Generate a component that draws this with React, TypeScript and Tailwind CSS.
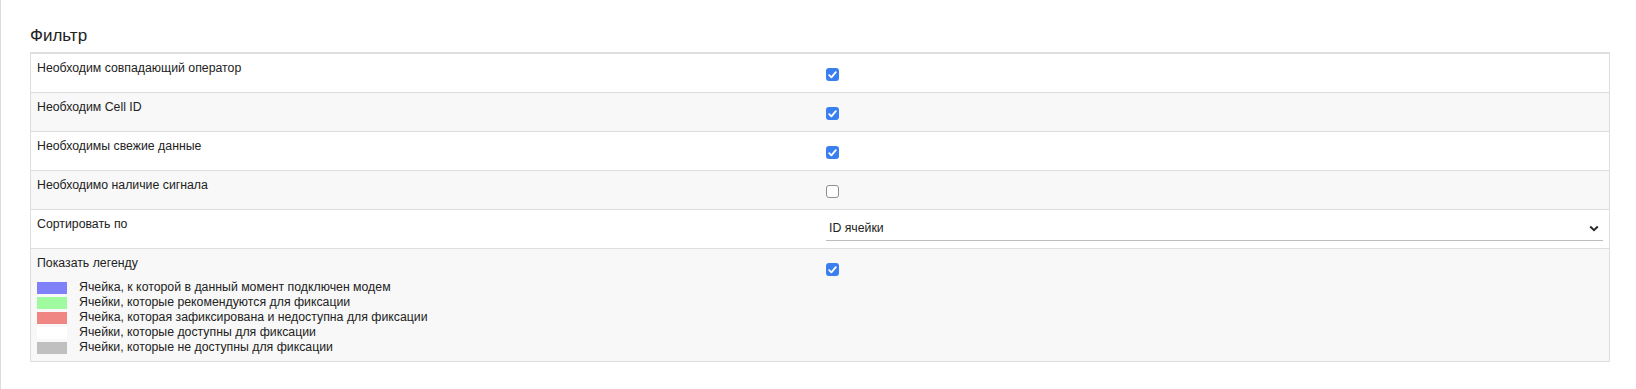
import React, { useState } from 'react';

const Checkbox: React.FC<{ checked: boolean; onChange: () => void }> = ({ checked, onChange }) => (
  <button
    type="button"
    onClick={onChange}
    className={`w-[13px] h-[13px] rounded-[3px] flex items-center justify-center ${checked ? 'bg-[#3a7ff0]' : 'bg-white border border-[#8f8f8f]'}`}
  >
    {checked && (
      <svg width="9" height="8" viewBox="0 0 9 8" fill="none">
        <path d="M1.2 4.2 L3.4 6.4 L7.8 1.2" stroke="white" strokeWidth="1.8" strokeLinecap="round" strokeLinejoin="round" />
      </svg>
    )}
  </button>
);

const legend = [
  { color: 'bg-[#8080f8]', text: 'Ячейка, к которой в данный момент подключен модем' },
  { color: 'bg-[#a0fba0]', text: 'Ячейки, которые рекомендуются для фиксации' },
  { color: 'bg-[#f08683]', text: 'Ячейка, которая зафиксирована и недоступна для фиксации' },
  { color: 'bg-white', text: 'Ячейки, которые доступны для фиксации' },
  { color: 'bg-[#c0c0c0]', text: 'Ячейки, которые не доступны для фиксации' },
];

const App: React.FC = () => {
  const [flags, setFlags] = useState({ operator: true, cell: true, fresh: true, signal: false, legend: true });
  const toggle = (k: keyof typeof flags) => setFlags({ ...flags, [k]: !flags[k] });

  const rows: { key: keyof typeof flags; label: string }[] = [
    { key: 'operator', label: 'Необходим совпадающий оператор' },
    { key: 'cell', label: 'Необходим Cell ID' },
    { key: 'fresh', label: 'Необходимы свежие данные' },
    { key: 'signal', label: 'Необходимо наличие сигнала' },
  ];

  return (
    <div className="min-h-screen bg-white border-l border-[#dcdcdc] pl-[29px] pr-[26px] pt-[26px] text-[#222] font-['Liberation_Sans',Arial,sans-serif]">
      <h2 className="text-[17px] leading-[20px] mb-[6px]">Фильтр</h2>

      <div className="border border-[#dedede] border-t-2 text-[12.3px] leading-[15px]">
        {rows.map((r, i) => (
          <div key={r.key} className={`grid grid-cols-2 h-[39px] border-b border-[#dedede] ${i % 2 === 1 ? 'bg-[#f8f8f8]' : 'bg-white'}`}>
            <div className="px-[6px] pt-[7px]">{r.label}</div>
            <div className="px-[6px] pt-[14px]">
              <Checkbox checked={flags[r.key]} onChange={() => toggle(r.key)} />
            </div>
          </div>
        ))}

        <div className="grid grid-cols-2 h-[39px] border-b border-[#dedede] bg-white">
          <div className="px-[6px] pt-[7px]">Сортировать по</div>
          <div className="px-[6px] pt-[7px]">
            <div className="flex items-center justify-between h-[24px] border-b border-[#bcbcbc] pl-[3px] pr-[4px]">
              <span>ID ячейки</span>
              <svg width="10" height="7" viewBox="0 0 10 7" fill="none">
                <path d="M1.2 1.5 L5 5.2 L8.8 1.5" stroke="#2a2a2a" strokeWidth="2" />
              </svg>
            </div>
          </div>
        </div>

        <div className="grid grid-cols-2 bg-[#f8f8f8]">
          <div className="px-[6px] pt-[7px] pb-[6px]">
            <div>Показать легенду</div>
            <div className="mt-[9px] flex flex-col">
              {legend.map(l => (
                <div key={l.text} className="flex items-center h-[15px]">
                  <span className={`w-[30px] h-[12px] ${l.color}`}></span>
                  <span className="ml-[12px]">{l.text}</span>
                </div>
              ))}
            </div>
          </div>
          <div className="px-[6px] pt-[14px]">
            <Checkbox checked={flags.legend} onChange={() => toggle('legend')} />
          </div>
        </div>
      </div>
    </div>
  );
};

export default App;
